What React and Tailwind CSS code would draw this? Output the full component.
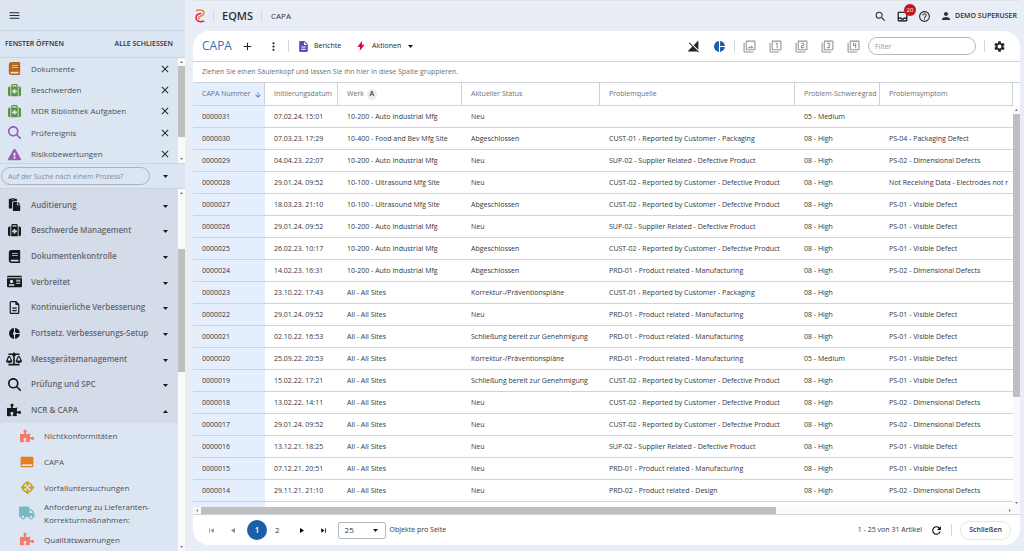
import React from 'react';
import { FaBook, FaExclamationTriangle, FaPaste, FaIdCard, FaBalanceScale, FaPuzzlePiece, FaTruck } from 'react-icons/fa';
import { FaSuitcaseMedical, FaMagnifyingGlass, FaRegFileLines } from 'react-icons/fa6';
import {
  MdMenu, MdClose, MdDonutSmall, MdCallToAction, MdSearch, MdOutlineInbox, MdHelpOutline, MdPerson, MdAdd, MdMoreVert,
  MdDescription, MdSignalCellularOff, MdPieChart, MdOutlineFilter, MdOutlineFilter1, MdOutlineFilter2, MdOutlineFilter3,
  MdOutlineFilter4, MdSettings, MdRefresh, MdArrowDownward, MdSkipPrevious, MdSkipNext,
} from 'react-icons/md';

const openWindows = [
  { label: 'Dokumente', Icon: FaBook, size: 13, color: 'text-[#b9661c]' },
  { label: 'Beschwerden', Icon: FaSuitcaseMedical, size: 13, color: 'text-[#5a9440]' },
  { label: 'MDR Bibliothek Aufgaben', Icon: FaSuitcaseMedical, size: 13, color: 'text-[#5a9440]' },
  { label: 'Prüfereignis', Icon: FaMagnifyingGlass, size: 13, color: 'text-[#9b59b6]' },
  { label: 'Risikobewertungen', Icon: FaExclamationTriangle, size: 13, color: 'text-[#9b59b6]' },
];

const groups = [
  { label: 'Auditierung', Icon: FaPaste, size: 13 },
  { label: 'Beschwerde Management', Icon: FaSuitcaseMedical, size: 13 },
  { label: 'Dokumentenkontrolle', Icon: FaBook, size: 13 },
  { label: 'Verbreitet', Icon: FaIdCard, size: 15 },
  { label: 'Kontinuierliche Verbesserung', Icon: FaRegFileLines, size: 13 },
  { label: 'Fortsetz. Verbesserungs-Setup', Icon: MdDonutSmall, size: 13 },
  { label: 'Messgerätemanagement', Icon: FaBalanceScale, size: 16 },
  { label: 'Prüfung und SPC', Icon: FaMagnifyingGlass, size: 13 },
  { label: 'NCR & CAPA', Icon: FaPuzzlePiece, size: 14, open: true },
];

const CrosshairIcon = ({ size, className }) => (
  <svg width={size} height={size} viewBox="0 0 16 16" className={className} fill="none" stroke="currentColor" strokeWidth="2.2">
    <circle cx="8" cy="8" r="5.6" />
    <path d="M8 0v6.500M8 9.500V16M0 8h6.500M9.500 8H16" />
  </svg>
);

const processes = [
  { label: 'Nichtkonformitäten', Icon: FaPuzzlePiece, size: 14, color: 'text-[#f8766a]' },
  { label: 'CAPA', Icon: MdCallToAction, size: 14, color: 'text-[#e67e22]' },
  { label: 'Vorfalluntersuchungen', Icon: CrosshairIcon, size: 13, color: 'text-[#c9a20c]' },
  { label: 'Anforderung zu Lieferanten-Korrekturmaßnahmen:', Icon: FaTruck, size: 16, color: 'text-[#76b9c4]' },
  { label: 'Qualitätswarnungen', Icon: FaPuzzlePiece, size: 14, color: 'text-[#f8766a]' },
];

const columns = ['CAPA Nummer', 'Initiierungsdatum', 'Werk', 'Aktueller Status', 'Problemquelle', 'Problem-Schweregrad', 'Problemsymptom'];

const DONE = 'Abgeschlossen';
const PLAN = 'Korrektur-/Präventionspläne';
const READY = 'Schließung bereit zur Genehmigung';
const CUST1 = 'CUST-01 - Reported by Customer - Packaging';
const CUST2 = 'CUST-02 - Reported by Customer - Defective Product';
const SUP2 = 'SUP-02 - Supplier Related - Defective Product';
const PRD1 = 'PRD-01 - Product related - Manufacturing';
const VISIBLE = 'PS-01 - Visible Defect';
const DIMENSION = 'PS-02 - Dimensional Defects';

const rows = [
  ['0000031', '07.02.24. 15:01', '10-200 - Auto Industrial Mfg', 'Neu', '', '05 - Medium', ''],
  ['0000030', '07.03.23. 17:29', '10-400 - Food and Bev Mfg Site', DONE, CUST1, '08 - High', 'PS-04 - Packaging Defect'],
  ['0000029', '04.04.23. 22:07', '10-200 - Auto Industrial Mfg', 'Neu', SUP2, '08 - High', DIMENSION],
  ['0000028', '29.01.24. 09:52', '10-100 - Ultrasound Mfg Site', 'Neu', CUST2, '08 - High', 'Not Receiving Data - Electrodes not r'],
  ['0000027', '18.03.23. 21:10', '10-100 - Ultrasound Mfg Site', DONE, CUST2, '08 - High', VISIBLE],
  ['0000026', '29.01.24. 09:52', '10-200 - Auto Industrial Mfg', 'Neu', SUP2, '08 - High', VISIBLE],
  ['0000025', '26.02.23. 10:17', '10-200 - Auto Industrial Mfg', DONE, CUST2, '08 - High', VISIBLE],
  ['0000024', '14.02.23. 16:31', '10-200 - Auto Industrial Mfg', DONE, PRD1, '08 - High', DIMENSION],
  ['0000023', '23.10.22. 17:43', 'All - All Sites', PLAN, CUST1, '08 - High', ''],
  ['0000022', '29.01.24. 09:52', 'All - All Sites', 'Neu', PRD1, '08 - High', VISIBLE],
  ['0000021', '02.10.22. 16:53', 'All - All Sites', READY, PRD1, '08 - High', VISIBLE],
  ['0000020', '25.09.22. 20:53', 'All - All Sites', PLAN, PRD1, '05 - Medium', VISIBLE],
  ['0000019', '15.02.22. 17:21', 'All - All Sites', READY, CUST2, '08 - High', VISIBLE],
  ['0000018', '13.02.22. 14:11', 'All - All Sites', 'Neu', CUST2, '08 - High', DIMENSION],
  ['0000017', '29.01.24. 09:52', 'All - All Sites', 'Neu', CUST2, '08 - High', DIMENSION],
  ['0000016', '13.12.21. 18:25', 'All - All Sites', 'Neu', SUP2, '08 - High', VISIBLE],
  ['0000015', '07.12.21. 20:51', 'All - All Sites', 'Neu', PRD1, '08 - High', VISIBLE],
  ['0000014', '29.11.21. 21:10', 'All - All Sites', 'Neu', 'PRD-02 - Product related - Design', '08 - High', DIMENSION],
];

const filterIcons = [MdOutlineFilter, MdOutlineFilter1, MdOutlineFilter2, MdOutlineFilter3, MdOutlineFilter4];

const Divider = () => <span className="w-px h-3 bg-[#d3d6db] shrink-0" />;

const Caret = ({ up }) => (
  <svg width="5" height="3" viewBox="0 0 5 3" className="text-[#16181b] shrink-0" fill="currentColor">
    <path d={up ? 'M0 3h5L2.5 0z' : 'M0 0h5L2.5 3z'} />
  </svg>
);

const SideArrow = ({ left }) => (
  <svg width="4" height="5" viewBox="0 0 4 5" className="shrink-0" fill="currentColor">
    <path d={left ? 'M4 0v5L0 2.500z' : 'M0 0v5l4-2.500z'} />
  </svg>
);

// Vertical scrollbar; the thumb is placed by the classes handed in
const ScrollBar = ({ thumb }) => (
  <div className="w-[7px] shrink-0 bg-[#fafafa] flex flex-col items-center justify-between py-[3px] text-[#777]">
    <svg width="3" height="2" viewBox="0 0 3 2" fill="currentColor" className="shrink-0"><path d="M0 2h3L1.5 0z" /></svg>
    <div className="flex-1 w-full min-h-0">
      <div className={`w-full bg-[#bfbfbf] ${thumb}`} />
    </div>
    <svg width="3" height="2" viewBox="0 0 3 2" fill="currentColor" className="shrink-0"><path d="M0 0h3L1.5 2z" /></svg>
  </div>
);

const Sidebar = () => (
  <aside className="w-[185px] shrink-0 flex flex-col bg-[#dce6f2] text-[#4b4f55]">
    <div className="h-[31px] shrink-0 flex items-center px-2 border-y border-t-[#dfe3ea] border-b-[#cbd3e0]">
      <button aria-label="Menü" className="text-[#26292d]"><MdMenu size={13} /></button>
    </div>
    <div className="h-[27px] shrink-0 flex items-center justify-between pl-[5px] pr-3 border-b border-[#cbd3e0] font-semibold text-[7px] text-[#2b2f34]">
      <h2>FENSTER ÖFFNEN</h2>
      <button>ALLE SCHLIESSEN</button>
    </div>
    <div className="h-[105px] shrink-0 flex overflow-hidden">
      <ul className="flex-1 grid auto-rows-fr h-[107px]">
        {openWindows.map(({ label, Icon, size, color }) => (
          <li key={label} className="flex items-center pl-1.5 pr-[7px]">
            <span className={`w-4 flex justify-center shrink-0 ${color}`}><Icon size={size} /></span>
            <a href="#" className="ml-[9px] flex-1 text-[8px] font-medium whitespace-nowrap">{label}</a>
            <button aria-label={`${label} schließen`} className="text-[#26292d]"><MdClose size={12} /></button>
          </li>
        ))}
      </ul>
      <ScrollBar thumb="mt-[3px] h-[71px]" />
    </div>
    <div className="h-[26px] shrink-0 flex items-center border-y border-[#cbd3e0] pl-px pr-[17px] justify-between">
      <input
        aria-label="Prozess suchen"
        placeholder="Auf der Suche nach einem Prozess?"
        className="w-[149px] h-[18px] rounded-full border border-[#a9b3c2] px-1.5 text-[7px] placeholder:text-[#838a95]"
      />
      <button aria-label="Prozesse anzeigen"><Caret /></button>
    </div>
    <div className="flex-1 min-h-0 overflow-hidden flex">
      <nav className="flex-1 h-max">
        <div className="bg-[#d4dbe9] pt-[3px] grid auto-rows-fr h-[234px]">
          {groups.map(({ label, Icon, size, open }) => (
            <button key={label} className="flex items-center pl-1.5 pr-2.5 text-left">
              <span className="w-4 flex justify-center shrink-0 text-[#17191c]"><Icon size={size} /></span>
              <span className="ml-[9px] flex-1 text-[8px] font-semibold text-[#64686f] whitespace-nowrap">{label}</span>
              <span className="pt-[3px]"><Caret up={open} /></span>
            </button>
          ))}
        </div>
        <div className="grid auto-rows-fr h-[129px]">
          {processes.map(({ label, Icon, size, color }) => (
            <a key={label} href="#" className="flex items-center pl-[19px]">
              <span className={`w-4 flex justify-center shrink-0 ${color}`}><Icon size={size} /></span>
              <span className="ml-[9px] w-[120px] text-[8px] leading-[13px] font-medium">{label}</span>
            </a>
          ))}
        </div>
      </nav>
      <ScrollBar thumb="mt-[55px] h-[123px]" />
    </div>
  </aside>
);

const TopBar = () => (
  <header className="h-[31px] shrink-0 flex items-center gap-2 pl-0.5 pr-[3px] border-t border-[#dfe3ea] text-[#2d3136]">
    <svg width="10" height="14" viewBox="0 0 10 14" fill="none" strokeWidth="1.5" strokeLinecap="round">
      <path d="M1.500 1.500C5 .2 9 1.200 9 4C9 6.400 6.500 6.600 4.500 7.600C3.200 8.300 3.200 9.300 4.200 9.800" stroke="#f0803c" />
      <path d="M5.800 4.400C3 4.600 1 6.400 1 8.900C1 12 4.500 13.400 8.600 12.200" stroke="#e8174b" />
    </svg>
    <Divider />
    <span className="text-[11px] font-semibold">EQMS</span>
    <Divider />
    <span className="ml-px text-[8px]">CAPA</span>
    <div className="ml-auto flex items-center gap-[9px]">
      <button aria-label="Suchen"><MdSearch size={13} /></button>
      <button aria-label="Posteingang" className="relative text-black">
        <MdOutlineInbox size={13} />
        <span className="absolute -top-1.5 left-2 w-3 h-3 rounded-full bg-[#c3161c] text-white text-[6px] leading-3 text-center">20</span>
      </button>
      <button aria-label="Hilfe"><MdHelpOutline size={13} /></button>
      <button className="flex items-center gap-[3px] text-[7px] font-semibold"><MdPerson size={12} />DEMO SUPERUSER</button>
    </div>
  </header>
);

const Toolbar = () => (
  <div className="h-[30px] shrink-0 flex items-center pl-[9px] pr-3.5 text-[#202428]">
    <h1 className="text-xs text-[#3a6fb0]">CAPA</h1>
    <button aria-label="Neu" className="ml-[9px]"><MdAdd size={13} /></button>
    <button aria-label="Mehr" className="ml-[13px] mr-2"><MdMoreVert size={13} /></button>
    <Divider />
    <button className="ml-2 flex items-center gap-1 text-[7px] font-medium"><MdDescription size={13} className="text-[#6b46c1]" />Berichte</button>
    <button className="ml-4 flex items-center gap-[7px] text-[7px] font-medium">
      <svg width="8" height="10" viewBox="0 0 8 11" fill="#d0103a"><path d="M5 0 0 6.500h3L2.500 11 8 4.200H5z" /></svg>
      Aktionen <Caret />
    </button>
    <div className="ml-auto flex items-center">
      <button aria-label="Signal"><MdSignalCellularOff size={13} /></button>
      <button aria-label="Diagramm" className="ml-[13px] mr-2 text-[#1a5fa8]"><MdPieChart size={13} /></button>
      <Divider />
      <div className="mx-2 flex gap-[13px] text-[#98929b]">
        {filterIcons.map((Icon, i) => (
          <button key={i} aria-label={`Ansicht ${i}`}><Icon size={13} /></button>
        ))}
      </div>
      <input aria-label="Filter" placeholder="Filter" className="w-[108px] h-[18px] rounded-full border border-[#b5b8bd] px-1.5 mr-2 text-[7px] placeholder:text-[#999]" />
      <Divider />
      <button aria-label="Einstellungen" className="ml-2"><MdSettings size={13} /></button>
    </div>
  </div>
);

const CapaTable = () => (
  <div className="flex-1 min-h-0 flex">
    <div className="flex-1 min-w-0 overflow-hidden">
      <table className="w-full table-fixed border-separate border-spacing-0 text-[7px] font-medium text-left whitespace-nowrap text-[#34373c]">
        <colgroup>
          <col className="w-[72px]" />
          <col className="w-[73px]" />
          <col className="w-[124px]" />
          <col className="w-[138px]" />
          <col className="w-[195px]" />
          <col className="w-[85px]" />
          <col />
        </colgroup>
        <thead>
          <tr className="h-[23px] text-[#6c7076]">
            {columns.map((name) => (
              <th key={name} className="p-0 pt-px pl-[9px] font-normal border-b border-r border-[#cfd2d6] first:bg-[#e4eefd]">
                <span className="flex items-center gap-[3px]">
                  {name}
                  {name === 'CAPA Nummer' && <MdArrowDownward size={8} className="text-[#2b6cc4]" />}
                  {name === 'Werk' && <span className="w-2.5 rounded-full bg-[#ececec] text-center font-semibold text-[#34373c]">A</span>}
                </span>
              </th>
            ))}
          </tr>
        </thead>
        <tbody>
          {rows.map((row) => (
            <tr key={row[0]} className="h-[22px]">
              {row.map((cell, i) => (
                <td key={i} className="p-0 pt-0.5 pl-[9px] border-b border-[#cfd2d6] first:bg-[#e4eefd]">{cell}</td>
              ))}
            </tr>
          ))}
          <tr className="h-[22px]">
            <td className="bg-[#e4eefd]" />
          </tr>
        </tbody>
      </table>
    </div>
    <div className="grid pt-[23px]">
      <ScrollBar thumb="mt-[3px] h-[283px]" />
    </div>
  </div>
);

const Pager = () => (
  <footer className="h-[30px] shrink-0 flex items-center pl-3.5 pr-[9px] text-[7px] font-medium text-[#34373c]">
    <button aria-label="Erste Seite" className="text-[#888]"><MdSkipPrevious size={9} /></button>
    <button aria-label="Vorherige Seite" className="ml-[15px] text-[#888]"><SideArrow left /></button>
    <button className="ml-3 w-5 h-5 rounded-full bg-[#1a5fa8] text-white text-[8px] font-semibold">1</button>
    <button className="ml-2 text-[8px]">2</button>
    <button aria-label="Nächste Seite" className="ml-5 text-black"><SideArrow /></button>
    <button aria-label="Letzte Seite" className="ml-[15px] text-black"><MdSkipNext size={9} /></button>
    <div className="relative ml-2.5">
      <select aria-label="Objekte pro Seite" className="block appearance-none w-12 h-[17px] pl-1.5 rounded-xs border border-[#b5b8bd] text-[8px]">
        <option>25</option>
      </select>
      <span className="absolute right-2 inset-y-0 flex items-center pointer-events-none"><Caret /></span>
    </div>
    <span className="ml-1">Objekte pro Seite</span>
    <span className="ml-auto">1 - 25 von 31 Artikel</span>
    <button aria-label="Aktualisieren" className="mx-2 text-black"><MdRefresh size={13} /></button>
    <Divider />
    <button className="ml-2 h-[19px] px-2 rounded-full border border-[#e4e6ea] font-semibold">Schließen</button>
  </footer>
);

const App = () => (
  <div className="h-screen flex bg-[#e9edf6] overflow-hidden font-['Open_Sans',sans-serif]">
    <Sidebar />
    <main className="flex-1 min-w-0 flex flex-col pl-2 pr-1 pb-1.5">
      <TopBar />
      <section className="flex-1 min-h-0 flex flex-col bg-white rounded-2xl overflow-hidden">
        <Toolbar />
        <p className="h-[22px] shrink-0 flex items-center px-[9px] border-y border-[#cfd2d6] text-[7px] font-medium text-[#6c7076]">
          Ziehen Sie einen Säulenkopf und lassen Sie ihn hier in diese Spalte gruppieren.
        </p>
        <CapaTable />
        <div className="h-2 shrink-0 flex items-center px-[3px] gap-[3px] border-b border-[#cfd2d6] bg-[#fafafa] text-[#888]">
          <svg width="2" height="3" viewBox="0 0 2 3" fill="currentColor"><path d="M2 0v3L0 1.500z" /></svg>
          <div className="flex-1 h-full">
            <div className="h-full w-5/7 bg-[#bfbfbf]" />
          </div>
          <svg width="2" height="3" viewBox="0 0 2 3" fill="currentColor" className="mr-1.5"><path d="M0 0v3l2-1.500z" /></svg>
        </div>
        <Pager />
      </section>
    </main>
  </div>
);

export default App;
